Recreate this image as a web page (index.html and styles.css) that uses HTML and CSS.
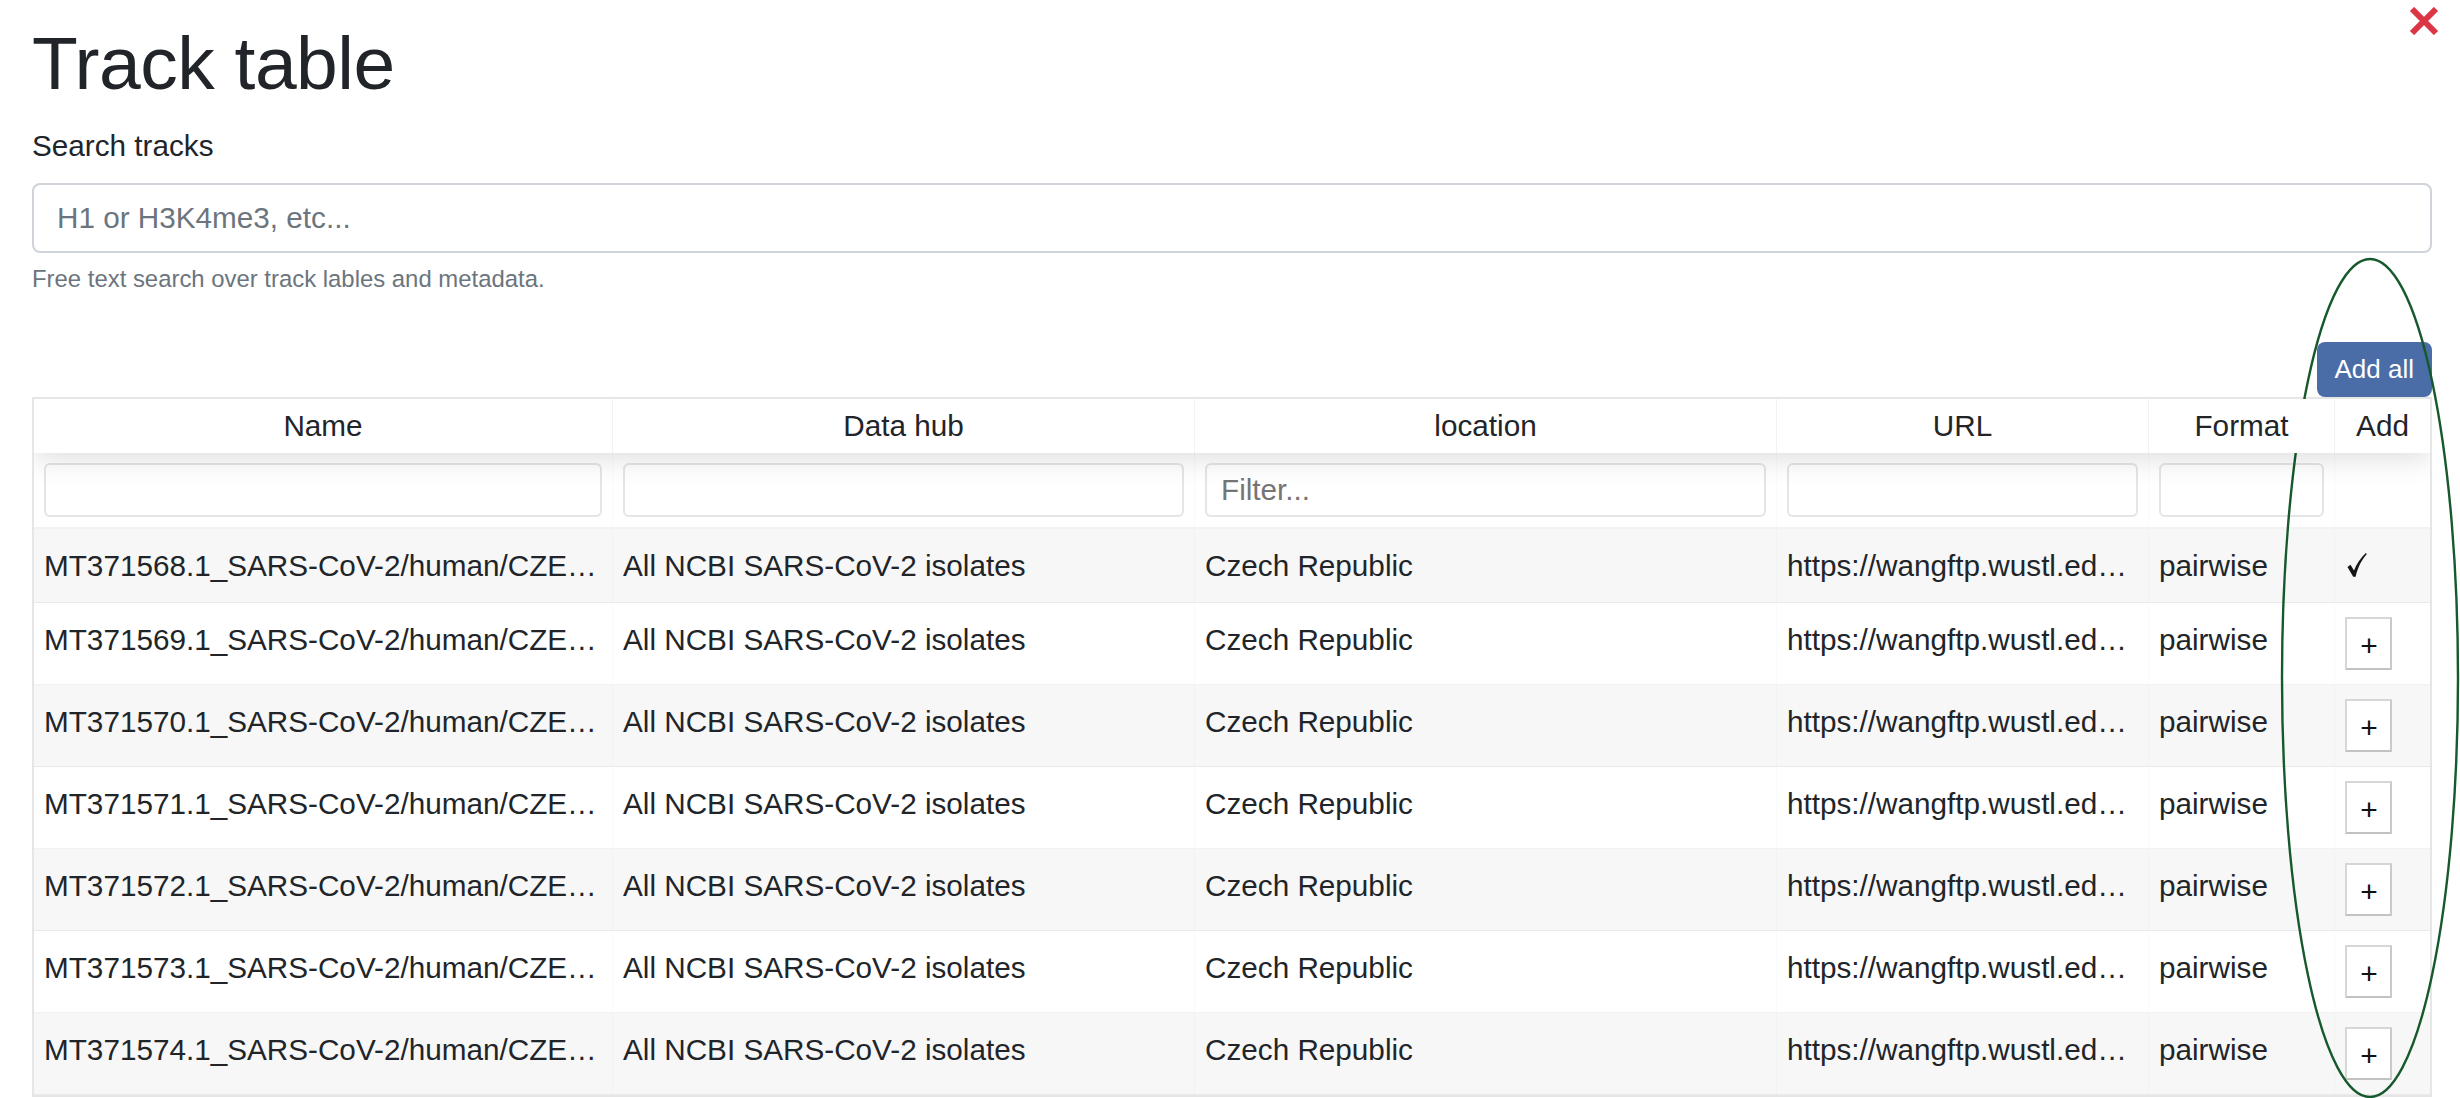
FILE: index.html
```html
<!DOCTYPE html>
<html lang="en">
<head>
<meta charset="utf-8">
<title>Track table</title>
<link rel="stylesheet" href="styles.css">
</head>
<body>
<div class="modal">
  <button class="close" aria-label="Close">
    <svg viewBox="0 0 30 28" width="30" height="28"><path d="M3 2 L27 26 M27 2 L3 26" stroke="#dc3545" stroke-width="6" fill="none"/></svg>
  </button>
  <h1 class="title">Track table</h1>
  <div class="search">
    <label class="search-label" for="q">Search tracks</label>
    <input id="q" class="search-input" type="text" placeholder="H1 or H3K4me3, etc...">
    <small class="search-help">Free text search over track lables and metadata.</small>
  </div>
  <div class="toolbar"><button class="btn-add-all">Add all</button></div>
  <div class="rtable">
    <div class="row head">
      <div class="th">Name</div>
      <div class="th">Data hub</div>
      <div class="th">location</div>
      <div class="th">URL</div>
      <div class="th">Format</div>
      <div class="th">Add</div>
    </div>
    <div class="row filters">
      <div class="fth"><input class="filter" type="text"></div>
      <div class="fth"><input class="filter" type="text"></div>
      <div class="fth"><input class="filter" type="text" placeholder="Filter..."></div>
      <div class="fth"><input class="filter" type="text"></div>
      <div class="fth"><input class="filter" type="text"></div>
      <div class="fth"></div>
    </div>
    <div class="tbody">
      <div class="row tr odd">
        <div class="td">MT371568.1_SARS-CoV-2/human/CZE…</div>
        <div class="td">All NCBI SARS-CoV-2 isolates</div>
        <div class="td">Czech Republic</div>
        <div class="td">https://wangftp.wustl.ed…</div>
        <div class="td">pairwise</div>
        <div class="td add"><svg class="check" viewBox="0 0 20 24" width="20" height="24"><path d="M0.5 14 L3.5 11.8 L7 17.6 C9.5 11 13.5 5 18.8 0 L19.8 1 C15 6.5 11 13.5 8.6 23.8 L6.2 23.8 Z" fill="#161616"/></svg></div>
      </div>
      <div class="row tr">
        <div class="td">MT371569.1_SARS-CoV-2/human/CZE…</div>
        <div class="td">All NCBI SARS-CoV-2 isolates</div>
        <div class="td">Czech Republic</div>
        <div class="td">https://wangftp.wustl.ed…</div>
        <div class="td">pairwise</div>
        <div class="td add"><button class="plus">+</button></div>
      </div>
      <div class="row tr odd">
        <div class="td">MT371570.1_SARS-CoV-2/human/CZE…</div>
        <div class="td">All NCBI SARS-CoV-2 isolates</div>
        <div class="td">Czech Republic</div>
        <div class="td">https://wangftp.wustl.ed…</div>
        <div class="td">pairwise</div>
        <div class="td add"><button class="plus">+</button></div>
      </div>
      <div class="row tr">
        <div class="td">MT371571.1_SARS-CoV-2/human/CZE…</div>
        <div class="td">All NCBI SARS-CoV-2 isolates</div>
        <div class="td">Czech Republic</div>
        <div class="td">https://wangftp.wustl.ed…</div>
        <div class="td">pairwise</div>
        <div class="td add"><button class="plus">+</button></div>
      </div>
      <div class="row tr odd">
        <div class="td">MT371572.1_SARS-CoV-2/human/CZE…</div>
        <div class="td">All NCBI SARS-CoV-2 isolates</div>
        <div class="td">Czech Republic</div>
        <div class="td">https://wangftp.wustl.ed…</div>
        <div class="td">pairwise</div>
        <div class="td add"><button class="plus">+</button></div>
      </div>
      <div class="row tr">
        <div class="td">MT371573.1_SARS-CoV-2/human/CZE…</div>
        <div class="td">All NCBI SARS-CoV-2 isolates</div>
        <div class="td">Czech Republic</div>
        <div class="td">https://wangftp.wustl.ed…</div>
        <div class="td">pairwise</div>
        <div class="td add"><button class="plus">+</button></div>
      </div>
      <div class="row tr odd">
        <div class="td">MT371574.1_SARS-CoV-2/human/CZE…</div>
        <div class="td">All NCBI SARS-CoV-2 isolates</div>
        <div class="td">Czech Republic</div>
        <div class="td">https://wangftp.wustl.ed…</div>
        <div class="td">pairwise</div>
        <div class="td add"><button class="plus">+</button></div>
      </div>
    </div>
  </div>
</div>
<svg class="annotation" width="184" height="846" viewBox="0 0 184 846"><ellipse cx="91" cy="422" rx="88" ry="419" fill="none" stroke="#15592c" stroke-width="2.4"/></svg>
</body>
</html>
```
FILE: styles.css
```css
* { box-sizing: border-box; }
html, body { margin: 0; padding: 0; background: #fff; }
body {
  font-family: "Liberation Sans", Arial, Helvetica, sans-serif;
  color: #212529;
  overflow: hidden;
  height: 1098px;
}
.modal {
  position: relative;
  width: 2432px;
  padding: 18px 0 0 32px;
}
.close {
  position: absolute;
  left: 2409px;
  top: 7px;
  width: 30px;
  height: 28px;
  padding: 0;
  border: 0;
  background: transparent;
  line-height: 0;
}
.title {
  margin: 0;
  font-size: 75px;
  line-height: 90px;
  font-weight: 400;
  letter-spacing: -0.5px;
  color: #212529;
}
.search { display: flex; flex-direction: column; }
.search-label {
  margin-top: 15px;
  font-size: 29.7px;
  line-height: 45px;
}
.search-input {
  margin-top: 15px;
  height: 70px;
  width: 2400px;
  border: 2px solid #ced4da;
  border-radius: 8px;
  padding: 0 23px;
  font-family: inherit;
  font-size: 29.7px;
  color: #495057;
  outline: none;
}
.search-input::placeholder { color: #6c757d; }
.search-help {
  margin-top: 8px;
  font-size: 23.9px;
  line-height: 36px;
  color: #6c757d;
}
.toolbar {
  margin-top: 45px;
  display: flex;
  justify-content: flex-end;
  width: 2400px;
}
.btn-add-all {
  height: 55px;
  padding: 0 18px;
  border: 0;
  border-radius: 8px;
  background: #4a6da7;
  color: #fff;
  font-family: inherit;
  font-size: 26px;
}
.rtable {
  width: 2400px;
  border: 2px solid #e6e6e6;
  overflow: hidden;
  font-size: 29.7px;
}
.row {
  display: grid;
  grid-template-columns: 579px 582px 582px 372px 186px 95px;
}
.head {
  position: relative;
  z-index: 1;
  background: #fff;
  box-shadow: 0 4px 30px 0 rgba(0, 0, 0, 0.15);
}
.th {
  padding: 10px 10px;
  line-height: 34px;
  text-align: center;
  border-right: 1px solid rgba(0, 0, 0, 0.05);
  white-space: nowrap;
  overflow: hidden;
}
.th:last-child, .fth:last-child, .td:last-child { border-right: 0; }
.filters {
  border-bottom: 2px solid rgba(0, 0, 0, 0.05);
}
.fth {
  padding: 10px 10px;
  border-right: 1px solid rgba(0, 0, 0, 0.02);
  min-height: 74px;
}
.filter {
  display: block;
  width: 100%;
  height: 54px;
  border: 2px solid rgba(0, 0, 0, 0.1);
  border-radius: 6px;
  padding: 0 14px;
  font-family: inherit;
  font-size: 29.7px;
  color: #212529;
  background: #fff;
  outline: none;
}
.filter::placeholder { color: #757575; }
.tr {
  border-bottom: 1px solid rgba(0, 0, 0, 0.05);
}
.tr.odd { background: rgba(0, 0, 0, 0.03); }
.td {
  padding: 14px 10px;
  line-height: 45px;
  white-space: nowrap;
  overflow: hidden;
  text-overflow: ellipsis;
  border-right: 1px solid rgba(0, 0, 0, 0.02);
}
.td.add { overflow: visible; }
.check {
  display: block;
  margin: 10px 0 0 2px;
}
.plus {
  display: block;
  width: 47px;
  height: 53px;
  padding: 4px 0 0 1px;
  background: #fff;
  border: 2px solid #d6d6d6;
  border-bottom-color: #c2c2c2;
  border-right-color: #cacaca;
  border-radius: 1px;
  font-family: "Liberation Sans", Arial, sans-serif;
  font-size: 30px;
  line-height: 46px;
  color: #111;
}
.annotation {
  position: absolute;
  left: 2279px;
  top: 256px;
  pointer-events: none;
}
```
